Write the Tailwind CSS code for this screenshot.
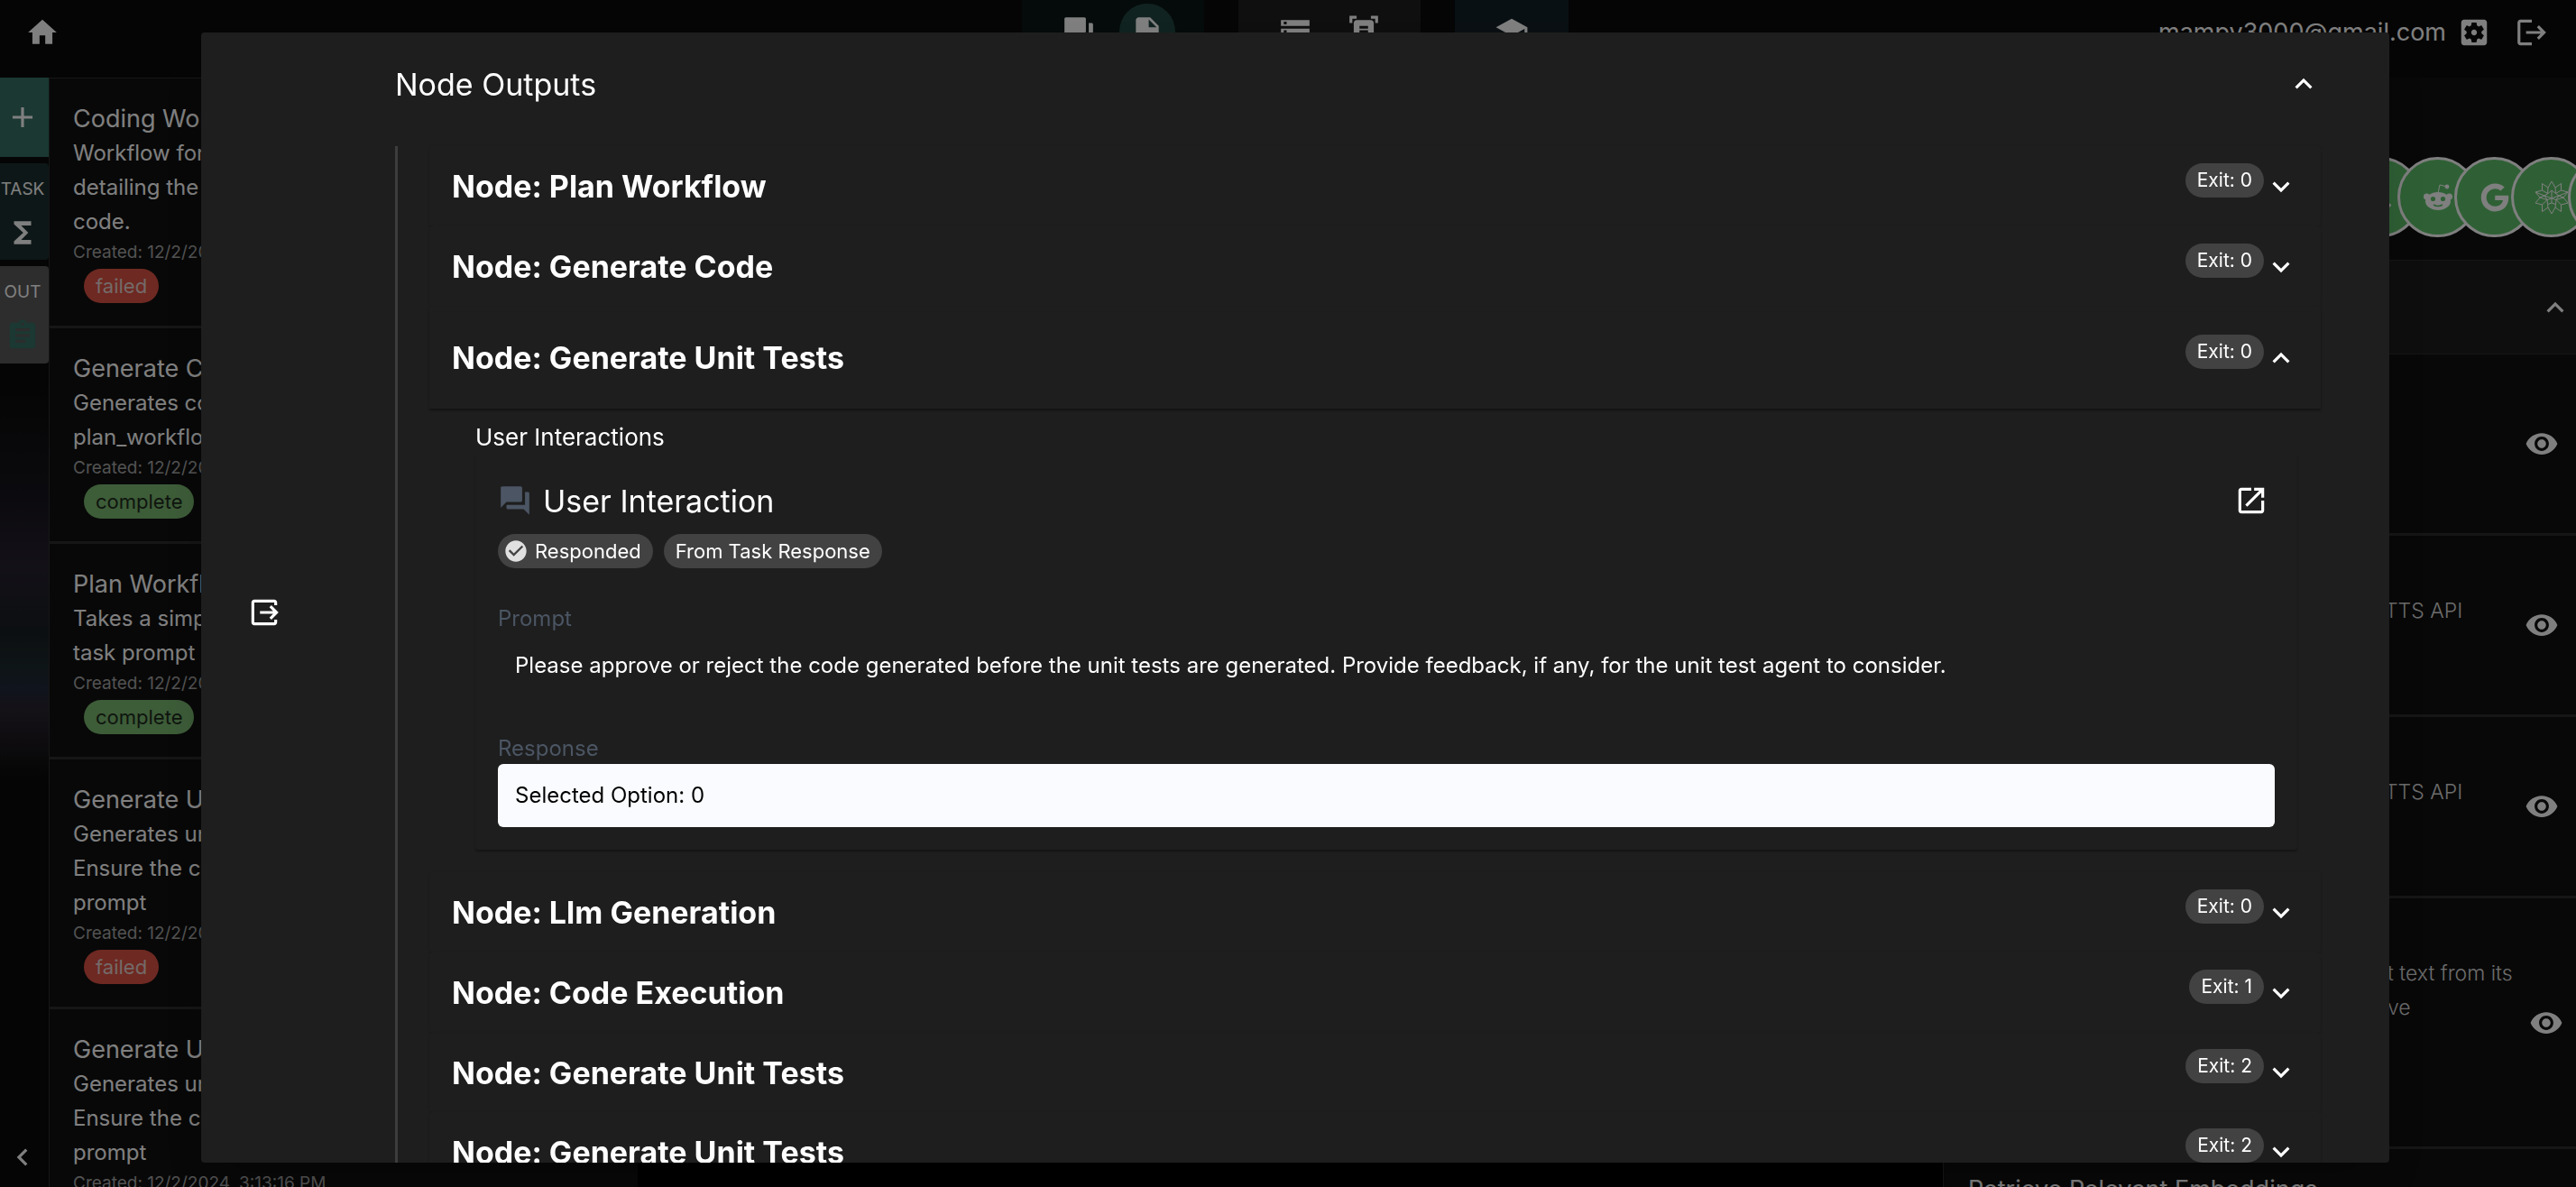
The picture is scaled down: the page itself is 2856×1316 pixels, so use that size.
<!DOCTYPE html>
<html lang="en">
<head>
<meta charset="utf-8">
<meta name="viewport" content="width=device-width, initial-scale=1">
<title>Node Outputs</title>
<script src="https://cdn.jsdelivr.net/npm/@tailwindcss/browser@4"></script>
</head>
<body class="h-screen overflow-hidden bg-black font-[Inter,sans-serif] text-[24px] text-white">

<svg class="hidden" aria-hidden="true">
  <symbol id="more" viewBox="0 0 24 24"><path d="M16.59 8.59 12 13.17 7.41 8.59 6 10l6 6 6-6z"/></symbol>
  <symbol id="less" viewBox="0 0 24 24"><path d="m12 8-6 6 1.41 1.41L12 10.83l4.59 4.58L18 14z"/></symbol>
  <symbol id="chat" viewBox="0 0 24 24"><path d="M21 6h-2v9H6v2c0 .55.45 1 1 1h11l4 4V7c0-.55-.45-1-1-1zm-4 6V3c0-.55-.45-1-1-1H3c-.55 0-1 .45-1 1v14l4-4h10c.55 0 1-.45 1-1z"/></symbol>
  <symbol id="eye" viewBox="0 0 24 24"><path d="M12 4.5C7 4.5 2.73 7.61 1 12c1.73 4.39 6 7.5 11 7.5s9.27-3.11 11-7.5c-1.73-4.39-6-7.5-11-7.5zM12 17c-2.76 0-5-2.24-5-5s2.24-5 5-5 5 2.24 5 5-2.24 5-5 5zm0-8c-1.66 0-3 1.34-3 3s1.34 3 3 3 3-1.34 3-3-1.34-3-3-3z"/></symbol>
</svg>

<div class="flex h-full flex-col">
  <header class="grid h-[86px] shrink-0 grid-cols-[1fr_auto_1fr] bg-[#0b0b0b]">
    <a href="#" aria-label="Home" class="mt-[17px] ml-7 size-[38px]"><svg class="size-[38px] fill-white" viewBox="0 0 24 24"><path d="M10 20v-6h4v6h5v-8h3L12 3 2 12h3v8z"/></svg></a>
    <nav class="ml-4 flex gap-[38px]">
      <div class="flex bg-[#0b1616] px-[25px]">
        <button aria-label="Chat" class="flex h-[70px] w-[76px] items-center justify-center"><svg class="size-[38px] fill-white"><use href="#chat"/></svg></button>
        <button aria-label="Tasks" class="mx-[7px] mt-1 flex size-[62px] items-center justify-center rounded-full bg-[#224640]"><svg class="size-[38px] fill-white" viewBox="0 0 24 24"><path d="M14 2H6c-1.1 0-2 .9-2 2v16c0 1.1.9 2 2 2h12c1.1 0 2-.9 2-2V8l-6-6zm-1 7V3.5L18.5 9H13z"/></svg></button>
      </div>
      <div class="flex bg-[#1e1e1e] px-[25px]">
        <button aria-label="Storage" class="flex h-[70px] w-[76px] items-center justify-center"><svg class="size-[38px] fill-white" viewBox="0 0 24 24"><path d="M2 20h20v-4H2v4zm2-3h2v2H4v-2zM2 4v4h20V4H2zm4 3H4V5h2v2zm-4 7h20v-4H2v4zm2-3h2v2H4v-2z"/></svg></button>
        <button aria-label="Scanner" class="flex h-[70px] w-[76px] items-center justify-center"><svg class="size-[38px] fill-white" viewBox="0 0 24 24"><path d="M7 3H4v3H2V1h5v2zm15 3V1h-5v2h3v3h2zM7 21H4v-3H2v5h5v-2zm13-3v3h-3v2h5v-5h-2zm-1 0c0 1.100-.9 2-2 2H7c-1.100 0-2-.9-2-2V6c0-1.100.9-2 2-2h10c1.100 0 2 .9 2 2v12zM15 8H9v2h6V8zm0 3H9v2h6v-2zm0 3H9v2h6v-2z"/></svg></button>
      </div>
      <div class="flex bg-[#132026] px-[25px]">
        <button aria-label="Training" class="flex h-[70px] w-[76px] items-center justify-center"><svg class="size-[38px] fill-white" viewBox="0 0 24 24"><path d="M5 13.180v4L12 21l7-3.820v-4L12 17l-7-3.820zM12 3 1 9l11 6 9-4.910V17h2V9L12 3z"/></svg></button>
      </div>
    </nav>
    <div class="mt-[17px] flex h-[38px] items-center justify-end pr-[30px]">
      <span class="mr-3 text-[27px]">mampy3000@gmail.com</span>
      <button aria-label="Settings" class="mr-[26px]"><svg class="size-[38px] fill-white" viewBox="0 0 24 24"><path d="M12 10c-1.100 0-2 .9-2 2s.9 2 2 2 2-.9 2-2-.9-2-2-2zm7-7H5c-1.110 0-2 .9-2 2v14c0 1.100.89 2 2 2h14c1.110 0 2-.9 2-2V5c0-1.100-.89-2-2-2zm-1.750 9c0 .23-.02.46-.05.68l1.480 1.160c.13.110.17.300.08.450l-1.400 2.420c-.09.150-.27.210-.43.150l-1.740-.7c-.36.280-.76.510-1.180.690l-.26 1.850c-.03.170-.18.300-.35.300h-2.800c-.17 0-.32-.13-.35-.29l-.26-1.850c-.43-.18-.82-.41-1.180-.69l-1.740.7c-.16.060-.34 0-.43-.15l-1.400-2.420c-.09-.15-.05-.34.080-.45l1.480-1.160c-.03-.23-.05-.46-.05-.69 0-.23.020-.46.050-.68l-1.480-1.160c-.13-.11-.17-.3-.08-.45l1.400-2.420c.09-.15.270-.21.430-.15l1.740.7c.36-.28.760-.51 1.180-.69l.26-1.850c.03-.17.180-.3.350-.3h2.800c.17 0 .32.130.35.290l.26 1.850c.43.180.82.410 1.180.690l1.740-.7c.16-.06.340 0 .43.150l1.400 2.420c.09.150.050.340-.08.450l-1.480 1.160c.03.230.05.460.05.690z"/></svg></button>
      <button aria-label="Log out"><svg class="size-[38px] fill-white" viewBox="0 0 24 24"><path d="m17 7-1.410 1.410L18.170 11H8v2h10.170l-2.580 2.580L17 17l5-5zM4 5h8V3H4c-1.100 0-2 .9-2 2v14c0 1.100.9 2 2 2h8v-2H4V5z"/></svg></button>
    </div>
  </header>

  <div class="flex min-h-0 flex-1">
    <aside class="flex w-[54px] shrink-0 flex-col gap-[7px] bg-[linear-gradient(#0b0b0b_28%,#15131a_37%,#272230_44%,#181e22_50%,#1c2a2c_53%,#20283a_55%,#2a242f_57%,#0b0b0b_63%)]">
      <button aria-label="Add" class="flex h-[88px] shrink-0 items-center justify-center bg-[#367064] pr-1"><svg class="size-[38px] fill-white" viewBox="0 0 24 24"><path d="M19 13h-6v6h-2v-6H5v-2h6V5h2v6h6z"/></svg></button>
      <button class="flex h-[107px] shrink-0 flex-col items-center gap-[14px] rounded-r bg-[#1c2e2e] pt-[14px] pr-1 text-[19px]"><span class="leading-[30px]">TASK</span><svg class="size-[38px] shrink-0 fill-white" viewBox="0 0 24 24"><path d="M18 4H6v2l6.500 6L6 18v2h12v-3h-7l5-5-5-5h7z"/></svg></button>
      <button class="flex h-[108px] shrink-0 flex-col items-center gap-[14px] rounded-r bg-[#5a5a5a] pt-[14px] pr-1 text-[19px]"><span class="leading-[30px]">OUT</span><svg class="size-[38px] shrink-0 fill-[#367064]" viewBox="0 0 24 24"><path d="M19 3h-4.180C14.400 1.840 13.300 1 12 1c-1.300 0-2.400.84-2.820 2H5c-1.100 0-2 .9-2 2v14c0 1.100.9 2 2 2h14c1.100 0 2-.9 2-2V5c0-1.100-.9-2-2-2zm-7 0c.55 0 1 .45 1 1s-.45 1-1 1-1-.45-1-1 .45-1 1-1zm2 14H7v-2h7v2zm3-4H7v-2h10v2zm0-4H7V7h10v2z"/></svg></button>
      <button aria-label="Collapse" class="mt-auto mb-[14px] flex justify-center pr-1"><svg class="size-[38px] fill-white" viewBox="0 0 24 24"><path d="M15.410 7.410 14 6l-6 6 6 6 1.410-1.410L10.830 12z"/></svg></button>
    </aside>

    <section class="w-[653px] shrink-0 overflow-hidden border-t border-l border-[#2c2c2c] bg-[#101010] leading-[38px]">
      <article class="border-b-[3px] border-[#2c2c2c] px-[26px] pt-[26px] pb-[25px]">
        <h3 class="text-[27px]">Coding Workflow</h3>
        <p>Workflow for<br>detailing the<br>code.</p>
        <p class="mb-[3px] text-[19px] leading-[30px] text-[#a5a5a5]">Created: 12/2/2024</p>
        <span class="ml-3 flex h-[38px] w-fit items-center rounded-full bg-[#dd5345] px-[13px] text-[22px] text-[#e8d4d0]">failed</span>
      </article>
      <article class="border-b-[3px] border-[#2c2c2c] px-[26px] pt-[26px] pb-[25px]">
        <h3 class="text-[27px]">Generate Code</h3>
        <p>Generates code<br>plan_workflow</p>
        <p class="mb-[3px] text-[19px] leading-[30px] text-[#a5a5a5]">Created: 12/2/2024</p>
        <span class="ml-3 flex h-[38px] w-fit items-center rounded-full bg-[#7ab870] px-[13px] text-[22px] text-[#1c2a1c]">complete</span>
      </article>
      <article class="border-b-[3px] border-[#2c2c2c] px-[26px] pt-[26px] pb-[25px]">
        <h3 class="text-[27px]">Plan Workflow</h3>
        <p>Takes a simple<br>task prompt</p>
        <p class="mb-[3px] text-[19px] leading-[30px] text-[#a5a5a5]">Created: 12/2/2024</p>
        <span class="ml-3 flex h-[38px] w-fit items-center rounded-full bg-[#7ab870] px-[13px] text-[22px] text-[#1c2a1c]">complete</span>
      </article>
      <article class="border-b-[3px] border-[#2c2c2c] px-[26px] pt-[26px] pb-[25px]">
        <h3 class="text-[27px]">Generate Unit Tests</h3>
        <p>Generates unit<br>Ensure the code<br>prompt</p>
        <p class="mb-[3px] text-[19px] leading-[30px] text-[#a5a5a5]">Created: 12/2/2024</p>
        <span class="ml-3 flex h-[38px] w-fit items-center rounded-full bg-[#dd5345] px-[13px] text-[22px] text-[#e8d4d0]">failed</span>
      </article>
      <article class="px-[26px] pt-[26px]">
        <h3 class="text-[27px]">Generate Unit Tests</h3>
        <p>Generates unit<br>Ensure the code<br>prompt</p>
        <p class="text-[19px] leading-[30px] text-[#a5a5a5]">Created: 12/2/2024, 3:13:16 PM</p>
      </article>
    </section>

    <section class="ml-auto w-[702px] shrink-0 overflow-hidden border-l border-[#2c2c2c] bg-[#101010] leading-[38px]">
      <div class="flex -space-x-[26px] pt-[88px] pb-[25px] pl-[440px]">
        <span class="flex size-[89px] shrink-0 items-center justify-center rounded-full border-3 border-white bg-[#5ec06a]"><svg class="size-8 fill-none stroke-white stroke-[4]" viewBox="0 0 32 32"><path d="M6 6l20 20M24 6 6 26"/></svg></span>
        <span class="flex size-[89px] shrink-0 items-center justify-center rounded-full border-3 border-white bg-[#5ec06a]"><svg class="size-8" viewBox="0 0 32 32"><path d="M16 11 18 2l8 2" fill="none" stroke="#fff"/><circle cx="26" cy="4" r="2.400" fill="#fff"/><circle cx="3.500" cy="15" r="3.500" fill="#fff"/><circle cx="28.500" cy="15" r="3.500" fill="#fff"/><ellipse cx="16" cy="20" rx="14" ry="10" fill="#fff"/><circle cx="10.500" cy="17.500" r="2.600" fill="#5ec06a"/><circle cx="21.500" cy="17.500" r="2.600" fill="#5ec06a"/><path d="M11 24q5 3 10 0" fill="none" stroke="#5ec06a" stroke-width="1.500"/></svg></span>
        <span class="flex size-[89px] shrink-0 items-center justify-center rounded-full border-3 border-white bg-[#5ec06a]"><svg class="size-8 fill-white" viewBox="0 0 488 512"><path d="M488 261.800C488 403.300 391.100 504 248 504 110.800 504 0 393.200 0 256S110.800 8 248 8c66.800 0 123 24.500 166.300 64.900l-67.500 64.900C258.500 52.600 94.300 116.600 94.300 256c0 86.500 69.100 156.600 153.700 156.600 98.200 0 135-70.400 140.800-106.900H248v-85.300h236.100c2.300 12.700 3.900 24.900 3.900 41.400z"/></svg></span>
        <span class="flex size-[89px] shrink-0 items-center justify-center rounded-full border-3 border-white bg-[#5ec06a]"><svg class="size-9 fill-none stroke-white" viewBox="0 0 36 36"><path d="M18 0l4 7 6.500-4.500V10l7.500 2-5 6 5 6-7.500 2v7.500L22 29l-4 7-4-7-6.500 4.500V26L0 24l5-6-5-6 7.500-2V2.500L14 7zM18 10l4.500 3.500L26 16l-3 4.500-.5 5L18 24l-4.500 1.500-.5-5L10 16l4-2.500zM18 10v14M10 16l13 4.500M26 16l-13 4.500M14 7l-.5 6.500L7.500 10M22 7l.5 6.500L28.500 10M5 18l5-2-10-4M31 18l-5-2 10-4M5 18l8 2.500L7.500 26M31 18l-8 2.500 5.500 5.500M14 29l-.5-3.500M22 29l.5-3.500"/></svg></span>
        <span class="size-[89px] shrink-0 rounded-full border-3 border-white bg-[#5ec06a]"></span>
      </div>
      <div class="flex h-[105px] items-center justify-end border-y border-[#2c2c2c] bg-[#1c1c1c] pr-1">
        <button aria-label="Collapse section"><svg class="size-[38px] fill-white"><use href="#less"/></svg></button>
      </div>
      <article class="flex h-[201px] items-center justify-end border-b-[3px] border-[#2c2c2c] pr-[19px]">
        <button aria-label="View"><svg class="size-[38px] fill-white"><use href="#eye"/></svg></button>
      </article>
      <article class="flex h-[201px] items-center justify-end border-b-[3px] border-[#2c2c2c] pr-[19px]">
        <p class="w-[155px] self-start pt-16 text-[23px] font-light text-[#d8d8d8]">TTS API</p>
        <button aria-label="View"><svg class="size-[38px] fill-white"><use href="#eye"/></svg></button>
      </article>
      <article class="flex h-[201px] items-center justify-end border-b-[3px] border-[#2c2c2c] pr-[19px]">
        <p class="w-[155px] self-start pt-16 text-[23px] font-light text-[#d8d8d8]">TTS API</p>
        <button aria-label="View"><svg class="size-[38px] fill-white"><use href="#eye"/></svg></button>
      </article>
      <article class="flex h-[278px] items-center justify-end border-b-[3px] border-[#2c2c2c] pr-[14px]">
        <p class="w-[157px] self-start pt-16 text-[23px] font-light text-[#d8d8d8]">t text from its<br>ve</p>
        <button aria-label="View"><svg class="size-[38px] fill-white"><use href="#eye"/></svg></button>
      </article>
      <article class="px-[27px] pt-[26px]">
        <h3 class="text-[27px]">Retrieve Relevant Embeddings</h3>
      </article>
    </section>
  </div>
</div>

<div class="fixed inset-0 flex bg-black/50 pt-9 pr-[207px] pb-[27px] pl-[223px]">
  <div role="dialog" aria-label="Node Outputs" class="flex min-w-0 flex-1 overflow-hidden rounded bg-[#1e1e1e] shadow-2xl">
    <div class="flex w-[190px] shrink-0 items-center pt-8 pl-[51px]">
      <button aria-label="Close output"><svg class="size-[38px] fill-white" viewBox="0 0 24 24"><path d="m17 17 5-5-5-5-1.410 1.410L18.170 11H9v2h9.170l-2.580 2.590zM19 19H5V5h14v2h2V5c0-1.100-.9-2-2-2H5c-1.100 0-2 .9-2 2v14c0 1.100.9 2 2 2h14c1.100 0 2-.9 2-2v-2h-2v2z"/></svg></button>
    </div>
    <div class="mr-[51px] min-w-0 flex-1 px-[25px]">
      <button class="flex h-[126px] w-full items-center justify-between pb-3 text-left"><span class="text-[34px]">Node Outputs</span><svg class="size-[38px] fill-white"><use href="#less"/></svg></button>

      <div class="border-l-[3px] border-[#3d3d3d] pl-[35px]">
        <button class="flex h-[89px] w-full items-center rounded bg-[#1e1e1e] px-[25px] text-left shadow-sm"><span class="flex-1 text-[34px] font-bold">Node: Plan Workflow</span><span class="mb-[14px] flex h-[38px] items-center rounded-full bg-[#424242] px-[13px] text-[21px]">Exit: 0</span><svg class="size-[38px] fill-white"><use href="#more"/></svg></button>
        <button class="flex h-[89px] w-full items-center rounded bg-[#1e1e1e] px-[25px] text-left shadow-sm"><span class="flex-1 text-[34px] font-bold">Node: Generate Code</span><span class="mb-[14px] flex h-[38px] items-center rounded-full bg-[#424242] px-[13px] text-[21px]">Exit: 0</span><svg class="size-[38px] fill-white"><use href="#more"/></svg></button>
        <button class="flex h-[113px] w-full items-center bg-[#1e1e1e] px-[25px] text-left shadow-[0_2px_2px_#141414]"><span class="flex-1 text-[34px] font-bold">Node: Generate Unit Tests</span><span class="mb-[14px] flex h-[38px] items-center rounded-full bg-[#424242] px-[13px] text-[21px]">Exit: 0</span><svg class="size-[38px] fill-white"><use href="#less"/></svg></button>

        <div class="pt-[13px] pr-[26px] pb-[25px] pl-[51px]">
          <h4 class="text-[26px] leading-[38px]">User Interactions</h4>
          <section class="rounded px-[25px] pt-[25px] pb-[25px] shadow-[0_2px_2px_#151515]">
            <div class="flex h-[52px] items-center">
              <svg class="mr-3 size-[38px] fill-[#4b5563]"><use href="#chat"/></svg>
              <h5 class="flex-1 text-[34px]">User Interaction</h5>
              <button aria-label="Open" class="p-[7px]"><svg class="size-[38px] fill-white" viewBox="0 0 24 24"><path d="M19 19H5V5h7V3H5c-1.110 0-2 .9-2 2v14c0 1.100.89 2 2 2h14c1.100 0 2-.9 2-2v-7h-2v7zM14 3v2h3.590l-9.830 9.830 1.410 1.410L19 6.410V10h2V3h-7z"/></svg></button>
            </div>
            <div class="mt-[11px] flex gap-3 text-[22px]">
              <span class="flex h-[38px] items-center gap-[7px] rounded-full bg-[#424242] pr-[13px] pl-[6px]"><svg class="size-[28px] fill-[#e0e0e0]" viewBox="0 0 24 24"><path d="M12 2C6.480 2 2 6.480 2 12s4.480 10 10 10 10-4.480 10-10S17.520 2 12 2zm-2 15-5-5 1.410-1.410L10 14.170l7.590-7.590L19 8l-9 9z"/></svg>Responded</span>
              <span class="flex h-[38px] items-center rounded-full bg-[#424242] px-[13px]">From Task Response</span>
            </div>
            <h6 class="mt-[39px] leading-[34px] text-[#4b5563]">Prompt</h6>
            <p class="px-[19px] py-[18px] leading-[34px]">Please approve or reject the code generated before the unit tests are generated. Provide feedback, if any, for the unit test agent to consider.</p>
            <h6 class="mt-10 leading-[34px] text-[#4b5563]">Response</h6>
            <p class="rounded-md bg-[#f9fbfe] px-[19px] py-[18px] leading-[34px] text-black">Selected Option: 0</p>
          </section>
        </div>

        <button class="flex h-[89px] w-full items-center rounded bg-[#1e1e1e] px-[25px] text-left shadow-sm"><span class="flex-1 text-[34px] font-bold">Node: Llm Generation</span><span class="mb-[14px] flex h-[38px] items-center rounded-full bg-[#424242] px-[13px] text-[21px]">Exit: 0</span><svg class="size-[38px] fill-white"><use href="#more"/></svg></button>
        <button class="flex h-[89px] w-full items-center rounded bg-[#1e1e1e] px-[25px] text-left shadow-sm"><span class="flex-1 text-[34px] font-bold">Node: Code Execution</span><span class="mb-[14px] flex h-[38px] items-center rounded-full bg-[#424242] px-[13px] text-[21px]">Exit: 1</span><svg class="size-[38px] fill-white"><use href="#more"/></svg></button>
        <button class="flex h-[88px] w-full items-center rounded bg-[#1e1e1e] px-[25px] text-left shadow-sm"><span class="flex-1 text-[34px] font-bold">Node: Generate Unit Tests</span><span class="mb-[14px] flex h-[38px] items-center rounded-full bg-[#424242] px-[13px] text-[21px]">Exit: 2</span><svg class="size-[38px] fill-white"><use href="#more"/></svg></button>
        <button class="flex h-[88px] w-full items-center rounded bg-[#1e1e1e] px-[25px] text-left shadow-sm"><span class="flex-1 text-[34px] font-bold">Node: Generate Unit Tests</span><span class="mb-[14px] flex h-[38px] items-center rounded-full bg-[#424242] px-[13px] text-[21px]">Exit: 2</span><svg class="size-[38px] fill-white"><use href="#more"/></svg></button>
      </div>
    </div>
  </div>
</div>
</body>
</html>
